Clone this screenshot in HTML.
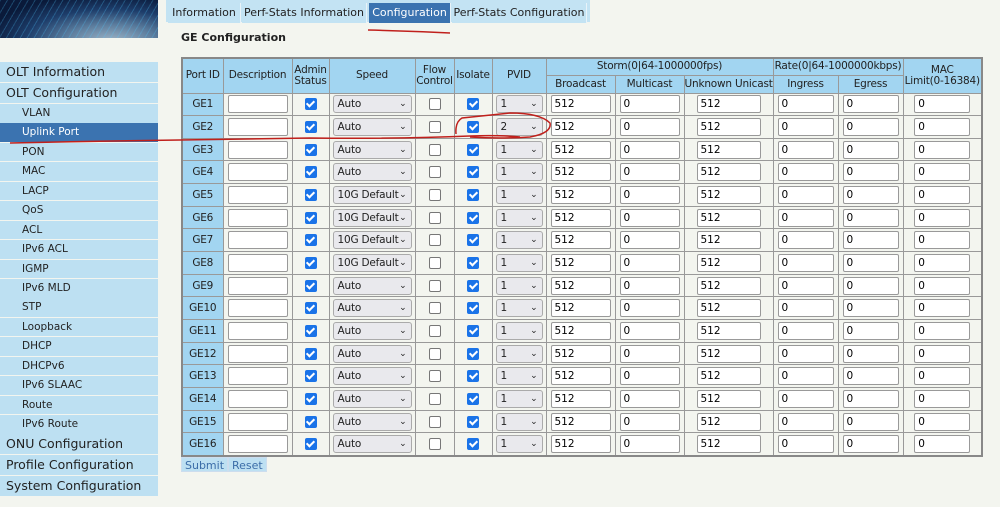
<!DOCTYPE html><html><head><meta charset="utf-8"><style>
*{box-sizing:border-box}
body{margin:0;width:1000px;height:507px;background:#f3f5ef;font-family:"DejaVu Sans","Liberation Sans",sans-serif;font-size:11px;color:#222;position:relative;overflow:hidden}
.banner{position:absolute;left:0;top:0;width:158px;height:38px;background:radial-gradient(ellipse at 70% 110%,#9fb6c8 0,#5a7b9c 30%,#1d3d6a 55%,#0a1a3a 80%);}
.banner:after{content:"";position:absolute;inset:0;background:repeating-linear-gradient(120deg,rgba(80,200,255,.25) 0 1px,transparent 1px 6px)}
.menu div{position:absolute;left:0;width:158px;background:#bde0f2;color:#222}
.big{height:20px;font-size:12.5px;padding-left:6px;line-height:20px}
.sub{height:18.5px;font-size:10.5px;padding-left:22px;line-height:18.5px}
.sel{background:#3b73b0!important;color:#fff!important}
.tabs{position:absolute;left:166px;top:0;width:424px;height:22px;background:#c3e3f3}
.tab{position:absolute;top:3px;height:20px;line-height:20px;text-align:center;font-size:11px;background:#c3e3f3;border-right:1px solid #e8f3f9;white-space:nowrap}
h3{position:absolute;left:181px;top:31px;margin:0;font-size:11px;font-weight:bold}
table{position:absolute;left:181px;top:57px;border-collapse:collapse;table-layout:fixed;width:800px;border:2px solid #888}
td,th{border:1px solid #999;padding:0;text-align:center;font-weight:normal;font-size:10.5px;letter-spacing:-.2px;white-space:nowrap;overflow:hidden}
th{background:#a2d5f1;line-height:11px}
tr.d td{height:22.67px;background:#f3f5ef}
tr.d td:first-child{background:#a2d5f1}
input.t{width:calc(100% - 8px);height:18px;border:1px solid #999;border-radius:2px;background:#fff;font:10.5px "DejaVu Sans",sans-serif;padding:0 3px;text-align:left;display:block;margin:0 auto}
.cb{display:inline-block;width:12px;height:12px;border-radius:2px;vertical-align:middle}
.on{background:#1a73e8;position:relative}
.on:after{content:"";position:absolute;left:3.5px;top:1px;width:3px;height:6px;border:solid #fff;border-width:0 2px 2px 0;transform:rotate(45deg)}
.off{border:1px solid #777;background:#fff}
.sl{display:flex;justify-content:space-between;align-items:center;width:calc(100% - 6px);height:18px;margin:0 auto;border:1px solid #aaa;border-radius:3px;background:#e9e9ed;padding:0 4px;font-size:10.5px;text-align:left;white-space:nowrap;overflow:hidden}
.sl i{font-style:normal;font-size:9px}
.btn{position:absolute;top:457px;height:15px;line-height:15px;background:#bde0f2;color:#3b6da8;font-size:11px;padding:0 3px;border:1px solid #cde}
</style></head><body>
<div class="banner"></div>
<div class="menu">
<div class="big" style="top:62px">OLT Information</div>
<div class="big" style="top:83px">OLT Configuration</div>
<div class="sub" style="top:104px">VLAN</div>
<div class="sub sel" style="top:123.4px">Uplink Port</div>
<div class="sub" style="top:142.9px">PON</div>
<div class="sub" style="top:162.3px">MAC</div>
<div class="sub" style="top:181.8px">LACP</div>
<div class="sub" style="top:201.2px">QoS</div>
<div class="sub" style="top:220.6px">ACL</div>
<div class="sub" style="top:240.1px">IPv6 ACL</div>
<div class="sub" style="top:259.5px">IGMP</div>
<div class="sub" style="top:279px">IPv6 MLD</div>
<div class="sub" style="top:298.4px">STP</div>
<div class="sub" style="top:317.8px">Loopback</div>
<div class="sub" style="top:337.3px">DHCP</div>
<div class="sub" style="top:356.7px">DHCPv6</div>
<div class="sub" style="top:376.2px">IPv6 SLAAC</div>
<div class="sub" style="top:395.6px">Route</div>
<div class="sub" style="top:415px">IPv6 Route</div>
<div class="big" style="top:434px">ONU Configuration</div>
<div class="big" style="top:455px">Profile Configuration</div>
<div class="big" style="top:476px">System Configuration</div>
</div>
<div class="tabs"></div>
<div class="tab" style="left:168px;width:73px">Information</div>
<div class="tab" style="left:242px;width:125px">Perf-Stats Information</div>
<div class="tab sel" style="left:369px;width:82px">Configuration</div>
<div class="tab" style="left:452px;width:135px">Perf-Stats Configuration</div>
<h3>GE Configuration</h3>
<table>
<colgroup><col style="width:41px"><col style="width:69px"><col style="width:37px"><col style="width:86px"><col style="width:39px"><col style="width:38px"><col style="width:54px"><col style="width:69px"><col style="width:69px"><col style="width:89px"><col style="width:65px"><col style="width:65px"><col style="width:79px"></colgroup>
<tr style="height:17px"><th rowspan="2">Port ID</th><th rowspan="2">Description</th><th rowspan="2">Admin<br>Status</th><th rowspan="2">Speed</th><th rowspan="2">Flow<br>Control</th><th rowspan="2">Isolate</th><th rowspan="2">PVID</th><th colspan="3">Storm(0|64-1000000fps)</th><th colspan="2">Rate(0|64-1000000kbps)</th><th rowspan="2">MAC<br>Limit(0-16384)</th></tr>
<tr style="height:18px"><th>Broadcast</th><th>Multicast</th><th>Unknown Unicast</th><th>Ingress</th><th>Egress</th></tr>
<tbody id="b"></tbody>
</table>
<script>
var h='';for(var i=1;i<=16;i++){var sp=(i>=5&&i<=8)?'10G Default':'Auto';var pv=i==2?'2':'1';
h+='<tr class="d"><td>GE'+i+'</td><td><input class="t"></td><td><span class="cb on"></span></td><td><div class="sl">'+sp+'<i>&#8964;</i></div></td><td><span class="cb off"></span></td><td><span class="cb on"></span></td><td><div class="sl">'+pv+'<i>&#8964;</i></div></td><td><input class="t" value="512"></td><td><input class="t" value="0"></td><td><input class="t" value="512" style="width:64px"></td><td><input class="t" value="0"></td><td><input class="t" value="0"></td><td><input class="t" value="0" style="width:56px"></td></tr>';}
document.getElementById('b').innerHTML=h;
</script>
<div class="btn" style="left:181px">Submit</div>
<div class="btn" style="left:228px">Reset</div>
<svg style="position:absolute;left:0;top:0" width="1000" height="507">
<g fill="none" stroke="#c0201c" stroke-width="1.5">
<path d="M368 30 Q410 31 450 33"/>
<path d="M10 143 Q100 141 180 140 Q250 139 310 138 Q400 139 470 136 Q500 135 520 137"/>
<path d="M456 134 Q455 122 462 118 Q490 115 510 113 Q540 113 550 123 Q552 133 530 137 Q500 139 470 137"/>
</g></svg>
</body></html>
